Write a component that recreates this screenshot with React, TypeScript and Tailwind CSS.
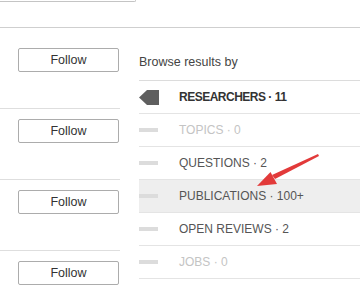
const followRows = [0, 1, 2, 3];

const categories = [
  { label: "RESEARCHERS · 11", state: "active" },
  { label: "TOPICS · 0", state: "empty" },
  { label: "QUESTIONS · 2", state: "normal" },
  { label: "PUBLICATIONS · 100+", state: "hover" },
  { label: "OPEN REVIEWS · 2", state: "normal" },
  { label: "JOBS · 0", state: "empty" },
  { label: "", state: "empty" },
];

const App = () => {
  return (
    <div
      className="relative w-[360px] h-[290px] overflow-hidden bg-white"
      style={{ fontFamily: '"Liberation Sans", Arial, sans-serif' }}
    >
      {/* Search box edge */}
      <div className="w-[136px] h-[2px] border-b border-r border-[#c4c4c4] rounded-br-[2px]"></div>

      <div className="mt-[25px] border-t border-[#cfcfcf] flex">
        {/* Follow column */}
        <div className="w-[120px] pt-[20px]">
          {followRows.map((i) => (
            <div
              key={i}
              className={i === 0 ? "pb-[36px] border-b border-[#dedede]" : "pt-[10px] pb-[36px] border-b border-[#dedede]"}
            >
              <button className="ml-[18px] w-[101px] h-[24px] border border-[#acacac] rounded-[2px] bg-white text-[12.5px] text-[#333] flex items-center justify-center">
                Follow
              </button>
            </div>
          ))}
        </div>

        {/* Browse column */}
        <div className="ml-[19px] flex-1">
          <div className="pt-[26px] pb-[10px] text-[12.5px] leading-[16px] text-[#444] border-b border-[#dcdcdc]">
            Browse results by
          </div>
          {categories.map((c, i) => (
            <div
              key={i}
              className={
                c.state === "hover"
                  ? "h-[33px] flex items-center border-b border-[#e4e4e4] bg-[#eeeeee]"
                  : "h-[33px] flex items-center border-b border-[#e4e4e4]"
              }
            >
              <div className="w-[40px] flex items-center">
                {c.state === "active" ? (
                  <svg width="20" height="15" viewBox="0 0 20 15">
                    <polygon points="0,7.5 8,0 20,0 20,15 8,15" fill="#5f5f5f" />
                  </svg>
                ) : (
                  <div className="w-[19px] h-[4px] bg-[#dcdcdc]"></div>
                )}
              </div>
              <span
                className={
                  c.state === "active"
                    ? "text-[12px] font-bold tracking-[-0.5px] text-[#333]"
                    : c.state === "empty"
                    ? "text-[12px] text-[#c4c4c4]"
                    : "text-[12px] text-[#555]"
                }
              >
                {c.label}
              </span>
            </div>
          ))}
        </div>
      </div>

      {/* Red annotation arrow */}
      <svg className="absolute left-0 top-0 pointer-events-none" width="360" height="290" viewBox="0 0 360 290">
        <polygon points="318,154 319,156 275,179 272,175" fill="#e23a3a" />
        <polygon points="257,186 270.5,172 277,184" fill="#e23a3a" />
      </svg>
    </div>
  );
};

export default App;
